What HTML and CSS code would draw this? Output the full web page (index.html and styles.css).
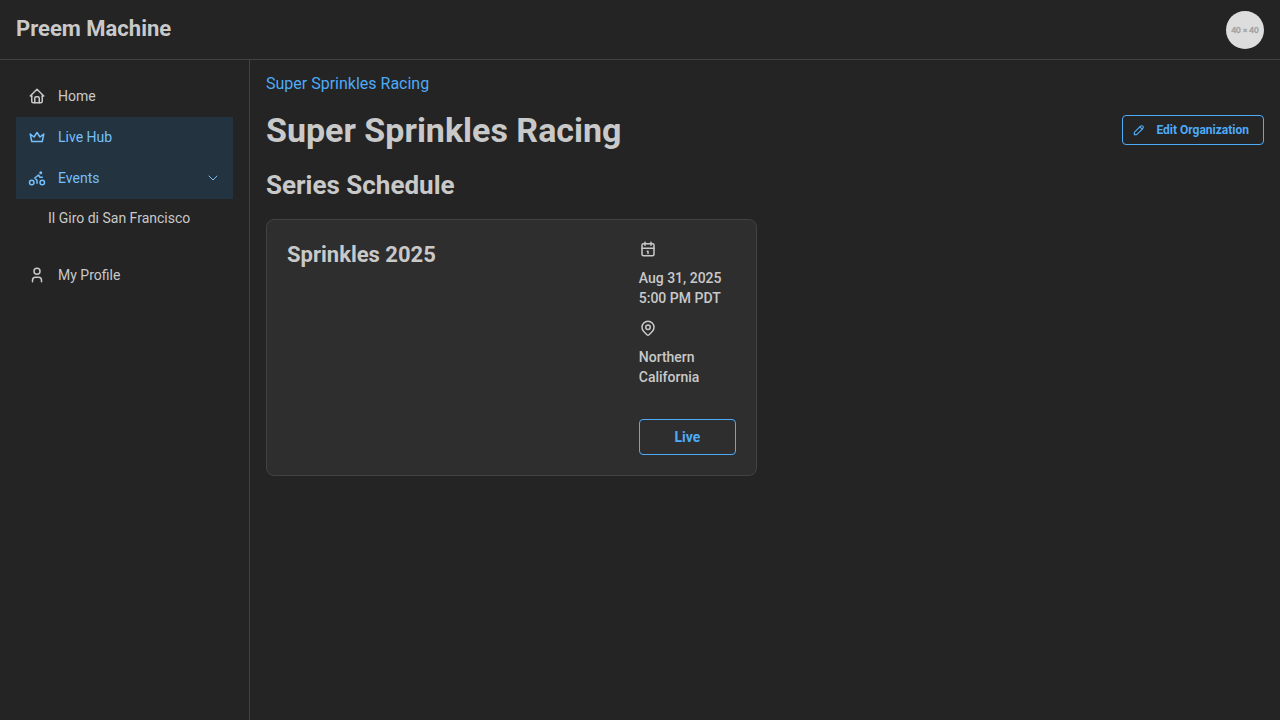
FILE: index.html
```html
<!DOCTYPE html>
<html lang="en">
<head>
<meta charset="utf-8">
<meta name="viewport" content="width=device-width, initial-scale=1">
<title>Preem Machine</title>
<link rel="stylesheet" href="styles.css">
</head>
<body>
<div class="shell">
  <header class="header">
    <h3 class="brand">Preem Machine</h3>
    <svg class="avatar" viewBox="0 0 38 38" role="img" aria-label="Account">
      <rect width="38" height="38" fill="#ddd"/>
      <text class="avatar-text" x="19" y="22" text-anchor="middle">40 × 40</text>
    </svg>
  </header>

  <nav class="sidebar">
    <a class="nav-link" href="#">
      <svg class="icon" viewBox="0 0 24 24"><path d="M5 12H3l9-9 9 9h-2"/><path d="M5 12v7a2 2 0 0 0 2 2h10a2 2 0 0 0 2-2v-7"/><path d="M9 21v-6a2 2 0 0 1 2-2h2a2 2 0 0 1 2 2v6"/></svg>
      <span>Home</span>
    </a>
    <a class="nav-link active" href="#" aria-current="page">
      <svg class="icon" viewBox="0 0 24 24"><path d="M12 6l4 6 5-4-2 10H5L3 8l5 4z"/></svg>
      <span>Live Hub</span>
    </a>
    <button class="nav-link active" type="button" aria-expanded="true">
      <svg class="icon" viewBox="0 0 24 24"><circle cx="5" cy="18" r="3"/><circle cx="19" cy="18" r="3"/><path d="M12 19v-4l-3-3 5-4 2 3h3"/><circle cx="17" cy="5" r="1"/></svg>
      <span class="nav-label">Events</span>
      <svg class="icon chevron" viewBox="0 0 24 24"><path d="M6 9l6 6 6-6"/></svg>
    </button>
    <a class="nav-link nested" href="#">Il Giro di San Francisco</a>
    <a class="nav-link profile" href="#">
      <svg class="icon" viewBox="0 0 24 24"><circle cx="12" cy="7" r="4"/><path d="M6 21v-2a4 4 0 0 1 4-4h4a4 4 0 0 1 4 4v2"/></svg>
      <span>My Profile</span>
    </a>
  </nav>

  <main class="main">
    <a class="breadcrumb" href="#">Super Sprinkles Racing</a>
    <div class="title-row">
      <h1 class="title">Super Sprinkles Racing</h1>
      <button class="button small" type="button">
        <svg class="icon icon-small" viewBox="0 0 24 24"><path d="M4 20h4L18.500 9.500a2.828 2.828 0 1 0-4-4L4 16v4"/><path d="M13.500 6.500l4 4"/></svg>
        Edit Organization
      </button>
    </div>
    <h2 class="subtitle">Series Schedule</h2>
    <div class="cards">
      <article class="card">
        <h3 class="card-title">Sprinkles 2025</h3>
        <div class="details">
          <div class="fact">
            <svg class="icon" viewBox="0 0 24 24"><path d="M4 7a2 2 0 0 1 2-2h12a2 2 0 0 1 2 2v12a2 2 0 0 1-2 2H6a2 2 0 0 1-2-2z"/><path d="M16 3v4M8 3v4M4 11h16M11 15h1M12 15v3"/></svg>
            <span>Aug 31, 2025 5:00 PM PDT</span>
          </div>
          <div class="fact">
            <svg class="icon" viewBox="0 0 24 24"><circle cx="12" cy="11" r="3"/><path d="M17.657 16.657L13.414 20.900a2 2 0 0 1-2.827 0l-4.244-4.243a8 8 0 1 1 11.314 0z"/></svg>
            <span>Northern California</span>
          </div>
          <button class="button live" type="button">Live</button>
        </div>
      </article>
    </div>
  </main>
</div>
</body>
</html>
```
FILE: styles.css
```css
* {
  box-sizing: border-box;
}

body {
  margin: 0;
  background: #242424;
  color: #c9c9c9;
  font-family: Roboto, sans-serif;
  font-size: 16px;
}

h1, h2, h3 {
  margin: 0;
  font-weight: 700;
}

.shell {
  display: grid;
  grid-template-columns: 250px minmax(0, 1fr);
  grid-template-rows: auto 1fr;
  min-height: 100vh;
}

.header {
  grid-column: 1 / -1;
  display: flex;
  align-items: center;
  justify-content: space-between;
  height: 60px;
  padding: 0 16px;
  border-bottom: 1px solid #424242;
}

.brand {
  font-size: 22px;
  line-height: 31px;
  padding-bottom: 2px;
}

.avatar {
  width: 38px;
  height: 38px;
  border-radius: 50%;
}

.avatar-text {
  fill: #a0a0a0;
  stroke: #a0a0a0;
  stroke-width: 0.3;
  font-family: Lato, sans-serif;
  font-size: 8px;
  font-weight: 700;
}

.sidebar {
  padding: 16px;
  border-right: 1px solid #424242;
}

.nav-link {
  display: flex;
  align-items: center;
  gap: 12px;
  width: 100%;
  padding: 8px 12px 9px;
  border: 0;
  background: none;
  color: inherit;
  font-family: inherit;
  font-size: 14px;
  line-height: 24px;
  text-align: left;
  text-decoration: none;
}

.nav-link.active {
  background: #243340;
  color: #74c0fc;
}

.nav-label {
  flex: 1;
}

.nested {
  padding: 8px 12px 8px 32px;
  line-height: 22px;
}

.profile {
  margin-top: 18px;
}

.icon {
  flex: none;
  width: 18px;
  height: 18px;
  fill: none;
  stroke: currentColor;
  stroke-width: 2;
  stroke-linecap: round;
  stroke-linejoin: round;
}

.icon-small {
  width: 14px;
  height: 14px;
}

.chevron {
  width: 16px;
  height: 16px;
  stroke-width: 1.5;
}

.main {
  display: flex;
  flex-direction: column;
  gap: 16px;
  padding: 16px;
}

.breadcrumb {
  align-self: flex-start;
  color: #4dabf7;
  line-height: 16px;
  text-decoration: none;
}

.title-row {
  display: flex;
  align-items: center;
  justify-content: space-between;
  gap: 16px;
}

.title {
  font-size: 34px;
  line-height: 44px;
}

.subtitle {
  font-size: 26px;
  line-height: 35px;
}

.button {
  display: flex;
  align-items: center;
  justify-content: center;
  height: 36px;
  padding: 0 18px;
  border: 1px solid #4dabf7;
  border-radius: 4px;
  background: none;
  color: #4dabf7;
  font-family: inherit;
  font-size: 14px;
  font-weight: 700;
}

.button.small {
  gap: 10px;
  height: 30px;
  padding: 0 14px 0 9px;
  font-size: 12px;
}

.cards {
  display: grid;
  grid-template-columns: repeat(2, minmax(0, 1fr));
  gap: 16px;
}

.card {
  display: grid;
  grid-template-columns: repeat(4, minmax(0, 1fr));
  gap: 20px;
  padding: 20px;
  border: 1px solid #424242;
  border-radius: 8px;
  background: #2e2e2e;
}

.card-title {
  grid-column: span 3;
  font-size: 22px;
  line-height: 29px;
}

.details {
  display: flex;
  flex-direction: column;
  gap: 11px;
}

.fact {
  display: flex;
  flex-direction: column;
  gap: 10px;
  font-size: 14px;
  font-weight: 500;
  line-height: 20px;
}

.live {
  margin-top: 21px;
}
```
